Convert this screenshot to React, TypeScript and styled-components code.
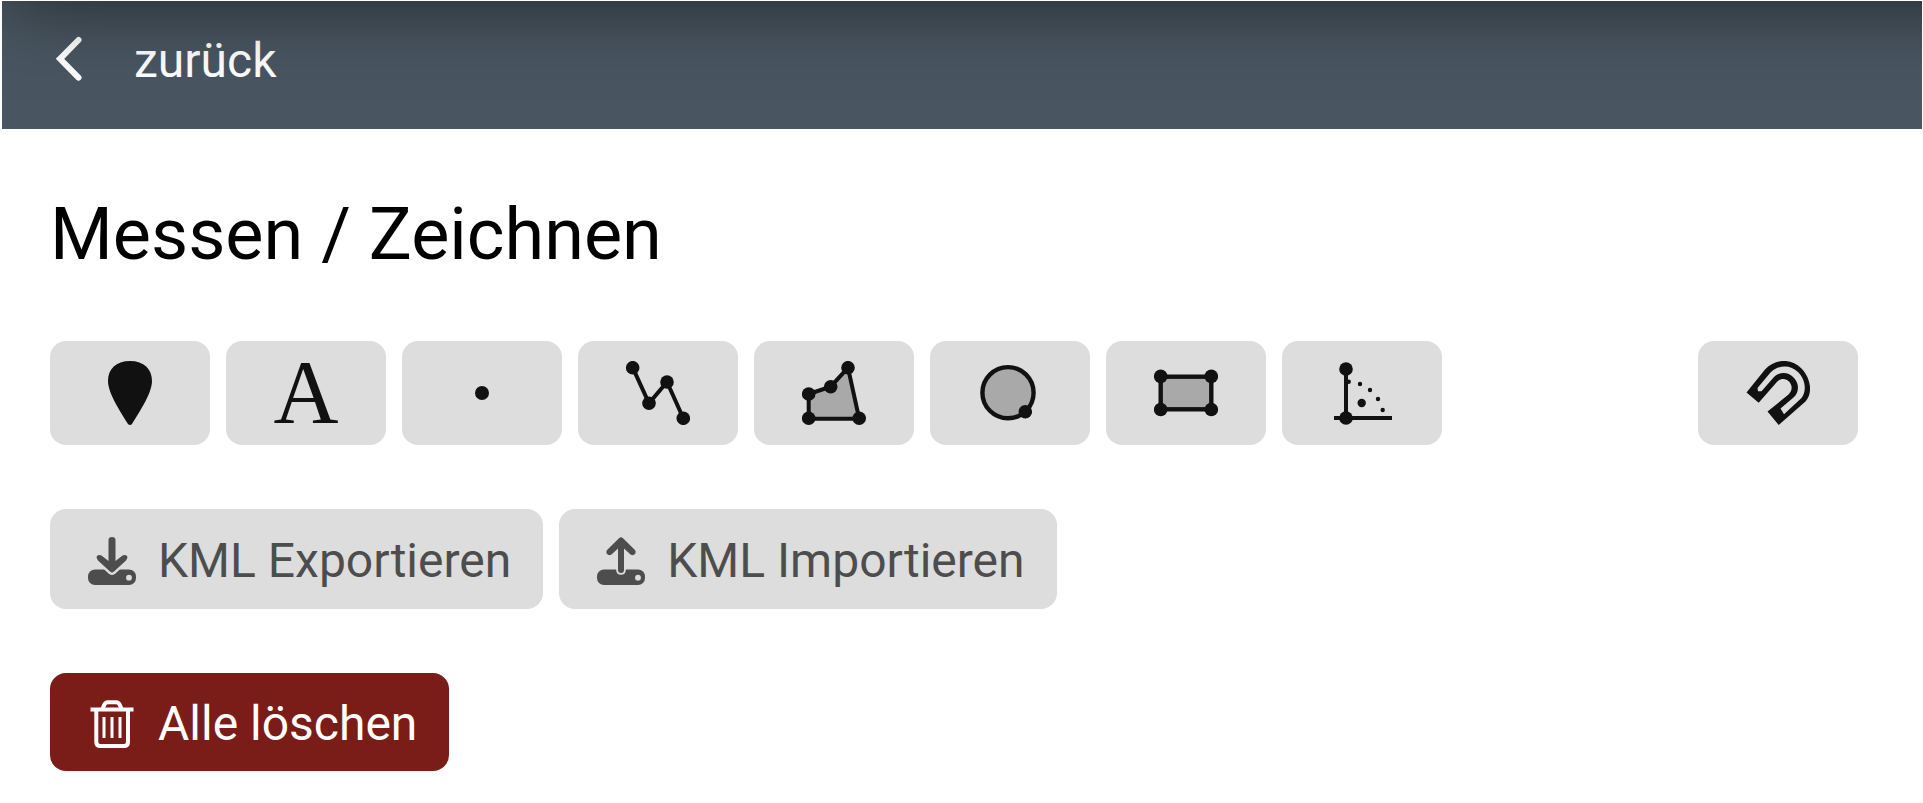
import React from 'react';
import styled, { createGlobalStyle } from 'styled-components';

const GlobalStyle = createGlobalStyle`
  *, *::before { box-sizing: border-box; }
  body {
    margin: 0;
    background: #fff;
    color: #000;
    font-family: Roboto, "Liberation Sans", sans-serif;
  }
  button { font: inherit; border: 0; cursor: pointer; }
  svg { display: block; flex: none; }
`;

const Page = styled.div`
  padding: 1px 1px 0 2px;
`;

const Header = styled.header`
  position: relative;
  overflow: hidden;
  display: flex;
  padding: 32px 48px 40px 50px;
  background: #495661;

  &::before {
    content: '';
    position: absolute;
    top: -200px;
    left: 0;
    right: -120px;
    height: 200px;
    box-shadow: 0 0 84px rgba(0, 0, 0, 0.58);
    pointer-events: none;
    z-index: 1;
  }
`;

const BackButton = styled.button`
  display: flex;
  align-items: center;
  gap: 48px;
  padding: 0;
  background: none;
  color: #fff;
  font-size: 48px;
  line-height: 56px;
`;

const Main = styled.main`
  display: flex;
  flex-direction: column;
  gap: 64px;
  padding: 64px 64px 32px 48px;
`;

const Title = styled.h1`
  margin: 0;
  font-size: 72px;
  font-weight: 400;
  line-height: 84px;
`;

const Toolbar = styled.div`
  display: flex;
  justify-content: space-between;
  gap: 16px;
`;

const Group = styled.div`
  display: flex;
  flex-wrap: wrap;
  gap: 16px;
`;

const ToolButton = styled.button`
  display: flex;
  align-items: center;
  justify-content: center;
  width: 160px;
  height: 104px;
  padding: 0;
  border-radius: 16px;
  background: #ddd;
  color: #111;
`;

const Letter = styled.span`
  font-family: "Liberation Serif", serif;
  font-size: 90px;
  line-height: 66px;
`;

const ActionButton = styled.button<{ $danger?: boolean }>`
  display: flex;
  align-items: center;
  gap: 22px;
  padding: ${p => (p.$danger ? '23px 32px 19px 38px' : '24px 32px 20px 38px')};
  border-radius: 16px;
  background: ${p => (p.$danger ? '#7a1c18' : '#ddd')};
  color: ${p => (p.$danger ? '#fff' : '#4d4d4d')};
  font-size: 48px;
  line-height: 56px;
  white-space: nowrap;
`;

const ToolIcon = ({ children }: { children: React.ReactNode }) => (
  <svg width="64" height="64" viewBox="0 0 64 64" fill="none" stroke="currentColor" strokeWidth="4" aria-hidden="true">
    {children}
  </svg>
);

const Nodes = ({ points, r = 6.8 }: { points: number[][]; r?: number }) => (
  <g fill="currentColor" stroke="none">
    {points.map(([x, y]) => (
      <circle key={`${x},${y}`} cx={x} cy={y} r={r} />
    ))}
  </g>
);

const tools: { label: string; icon: React.ReactNode }[] = [
  {
    label: 'Markierung',
    icon: (
      <ToolIcon>
        <path
          d="M32 0C46 0 54 8 54 20C54 32 42 50 34 63Q32 65 30 63C22 50 10 32 10 20C10 8 18 0 32 0Z"
          fill="currentColor"
          stroke="none"
        />
      </ToolIcon>
    ),
  },
  { label: 'Text', icon: <Letter>A</Letter> },
  { label: 'Punkt', icon: <ToolIcon><Nodes points={[[32, 32]]} r={7} /></ToolIcon> },
  {
    label: 'Linie',
    icon: (
      <ToolIcon>
        <path d="M6.7 6.7L23 42.3L41 21L57.3 57.3" />
        <Nodes points={[[6.7, 6.7], [23, 42.3], [41, 21], [57.3, 57.3]]} />
      </ToolIcon>
    ),
  },
  {
    label: 'Polygon',
    icon: (
      <ToolIcon>
        <path d="M6.7 33L28.7 25.7L46 6.7L57.2 57.7H6.7Z" fill="#a9a9a9" />
        <Nodes points={[[6.7, 33], [28.7, 25.7], [46, 6.7], [57.2, 57.2], [6.7, 57.2]]} />
      </ToolIcon>
    ),
  },
  {
    label: 'Kreis',
    icon: (
      <ToolIcon>
        <circle cx="30" cy="31.7" r="25.6" fill="#a9a9a9" strokeWidth="4.4" />
        <Nodes points={[[47.3, 50.7]]} />
      </ToolIcon>
    ),
  },
  {
    label: 'Rechteck',
    icon: (
      <ToolIcon>
        <rect x="6.7" y="15.7" width="50.6" height="32.6" fill="#a9a9a9" strokeWidth="4.4" />
        <Nodes points={[[6.7, 15.4], [57.3, 15.4], [57.3, 48.5], [6.7, 48.5]]} />
      </ToolIcon>
    ),
  },
  {
    label: 'Winkel',
    icon: (
      <ToolIcon>
        <path d="M16 8V57M4 57H62" strokeWidth="4" />
        <Nodes points={[[16, 8], [16, 57]]} />
        <Nodes points={[[31.7, 42]]} r={4.2} />
        <Nodes points={[[18.7, 20.7], [30, 23], [40, 29], [48, 38], [52.7, 49]]} r={2.2} />
      </ToolIcon>
    ),
  },
];

const MagnetIcon = () => (
  <ToolIcon>
    <g stroke="none">
      <path
        d="M.5 31.500L19 8.500C30-3 46-2.500 55.500 7.500C65 17.500 67 32 59.500 40.500L32.700 64L21.500 50.500L42.500 33.500C46.500 29.500 46.500 25 43.500 21C40 17 35 17 31.300 20.500L12.700 41.800Z"
        fill="currentColor"
      />
      <path
        d="M11.500 27L24.500 11.500C33 3.500 44.500 3.500 52 11C59.500 18.500 61 29.500 55.500 37L38 53.300L34.500 47.500L47.500 36.500C53 31.500 53.500 23.500 48.500 17.500C42.500 10.500 34 10.500 28 16L15.500 30.300H12Z"
        fill="#ddd"
      />
    </g>
  </ToolIcon>
);

const DriveIcon = ({ direction }: { direction: 'down' | 'up' }) => {
  const down = direction === 'down';
  const arrow = down
    ? 'M20.500 3Q20.500 0 24 0Q27.500 0 27.500 3V24L34.500 18.500Q37.500 17 39.200 19.200Q40.300 21.500 38 23.500L26 34.500Q24 36.500 22 34.500L10 23.500Q7.700 21.500 8.800 19.200Q10.500 17 13.500 18.500L20.500 24Z'
    : 'M21 11.500L14.500 17.500Q12 19 10 17Q8.500 14.500 10.500 12.500L22 1.200Q24 -.5 26 1.200L37.500 12.500Q39.500 14.500 38 17Q36 19 33.500 17.500L27 11.500V33Q27 36 24 36Q21 36 21 33Z';
  return (
    <svg width="48" height="48" viewBox="0 0 48 48" fill="currentColor" aria-hidden="true">
      <rect y="32.5" width="48" height="15.5" rx="7" />
      <circle cx="41" cy="40.7" r="2.9" fill="#ddd" />
      <path d={arrow} stroke="#ddd" strokeWidth={down ? 5 : 3.6} />
      <path d={arrow} />
    </svg>
  );
};

const TrashIcon = () => (
  <svg width="48" height="48" viewBox="0 0 48 48" fill="none" stroke="currentColor" strokeWidth="4" aria-hidden="true">
    <path d="M2.500 9.500H45.500" />
    <path d="M13.500 9C16.500 8 15 2.200 20 2.200H28C33 2.200 31.500 8 34.500 9" />
    <path d="M8.300 11V42Q8.300 46 12.300 46H36Q40 46 40 42V11" />
    <path d="M16 17V38M24 17V38M32 17V38" strokeWidth="3" />
  </svg>
);

export default function App() {
  return (
    <Page>
      <GlobalStyle />
      <Header>
        <BackButton type="button">
          <svg width="34" height="52" viewBox="0 0 34 52" fill="none" stroke="currentColor" strokeWidth="6" strokeLinecap="round" aria-hidden="true">
            <path d="M26.500 5L8 23.800L26.500 42.600" />
          </svg>
          zurück
        </BackButton>
      </Header>
      <Main>
        <Title>Messen / Zeichnen</Title>
        <Toolbar>
          <Group>
            {tools.map(tool => (
              <ToolButton key={tool.label} type="button" aria-label={tool.label}>
                {tool.icon}
              </ToolButton>
            ))}
          </Group>
          <ToolButton type="button" aria-label="Einrasten">
            <MagnetIcon />
          </ToolButton>
        </Toolbar>
        <Group>
          <ActionButton type="button">
            <DriveIcon direction="down" />
            KML Exportieren
          </ActionButton>
          <ActionButton type="button">
            <DriveIcon direction="up" />
            KML Importieren
          </ActionButton>
        </Group>
        <Group>
          <ActionButton type="button" $danger>
            <TrashIcon />
            Alle löschen
          </ActionButton>
        </Group>
      </Main>
    </Page>
  );
}
